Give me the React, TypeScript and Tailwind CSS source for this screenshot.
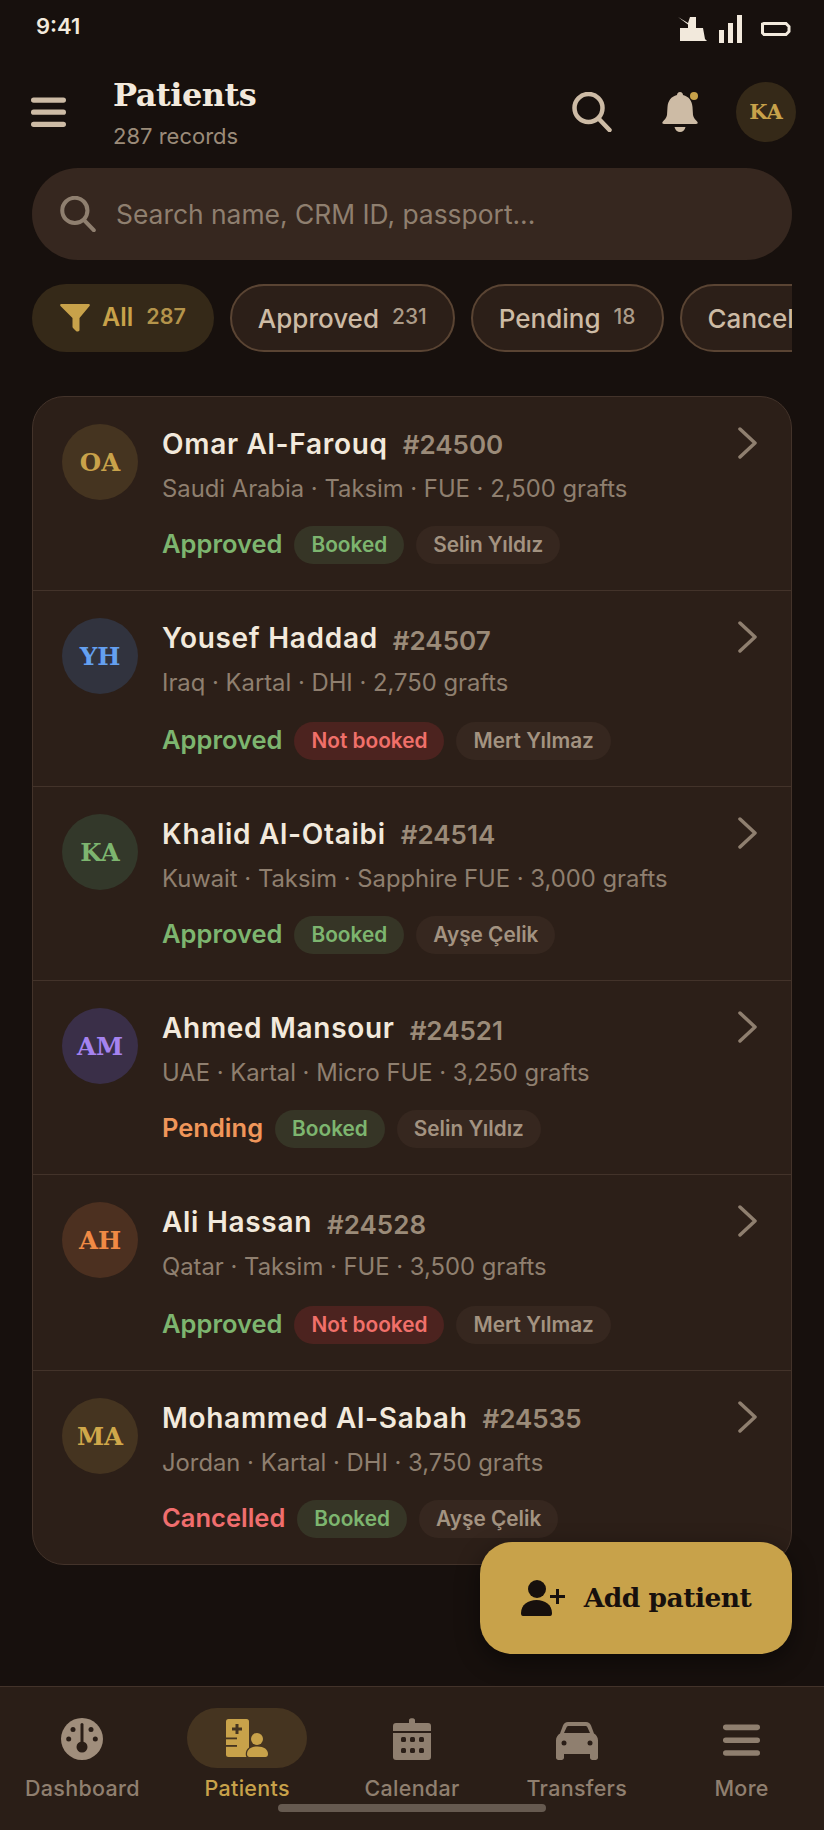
import React from 'react';

const SANS = 'font-["Inter","Noto_Sans",sans-serif]';
const SERIF = 'font-["DejaVu_Serif","Liberation_Serif",serif]';

type Patient = {
  initials: string;
  avatarClass: string;
  name: string;
  id: string;
  idDrop: boolean;
  info: string;
  status: 'Approved' | 'Pending' | 'Cancelled';
  booked: boolean;
  staff: string;
};

const PATIENTS: Patient[] = [
  { initials: 'OA', avatarClass: 'bg-[#453420] text-[#c8a24a]', name: 'Omar Al-Farouq', id: '#24500', idDrop: false, info: 'Saudi Arabia · Taksim · FUE · 2,500 grafts', status: 'Approved', booked: true, staff: 'Selin Yıldız' },
  { initials: 'YH', avatarClass: 'bg-[#31333e] text-[#64a0f0]', name: 'Yousef Haddad', id: '#24507', idDrop: true, info: 'Iraq · Kartal · DHI · 2,750 grafts', status: 'Approved', booked: false, staff: 'Mert Yılmaz' },
  { initials: 'KA', avatarClass: 'bg-[#33382a] text-[#7db56f]', name: 'Khalid Al-Otaibi', id: '#24514', idDrop: false, info: 'Kuwait · Taksim · Sapphire FUE · 3,000 grafts', status: 'Approved', booked: true, staff: 'Ayşe Çelik' },
  { initials: 'AM', avatarClass: 'bg-[#3a2f48] text-[#a583f0]', name: 'Ahmed Mansour', id: '#24521', idDrop: true, info: 'UAE · Kartal · Micro FUE · 3,250 grafts', status: 'Pending', booked: true, staff: 'Selin Yıldız' },
  { initials: 'AH', avatarClass: 'bg-[#4c3020] text-[#f08a45]', name: 'Ali Hassan', id: '#24528', idDrop: true, info: 'Qatar · Taksim · FUE · 3,500 grafts', status: 'Approved', booked: false, staff: 'Mert Yılmaz' },
  { initials: 'MA', avatarClass: 'bg-[#453420] text-[#d0a84a]', name: 'Mohammed Al-Sabah', id: '#24535', idDrop: false, info: 'Jordan · Kartal · DHI · 3,750 grafts', status: 'Cancelled', booked: true, staff: 'Ayşe Çelik' },
];

const STATUS_COLOR = {
  Approved: 'text-[#7db56f]',
  Pending: 'text-[#f0965a]',
  Cancelled: 'text-[#f06e6e]',
};

const SearchIcon = ({ className }: { className: string }) => (
  <svg viewBox="0 0 40 40" className={className} fill="none" stroke="currentColor" strokeWidth="4.5" strokeLinecap="round">
    <circle cx="16.5" cy="16" r="14" />
    <path d="M27 27l10.5 11" />
  </svg>
);

const BarsIcon = ({ className }: { className: string }) => (
  <svg viewBox="0 0 36 30" className={className} fill="currentColor">
    <rect x="0" y="0" width="36" height="5.4" rx="2.7" />
    <rect x="0" y="12.5" width="36" height="5.4" rx="2.7" />
    <rect x="0" y="25" width="36" height="5.4" rx="2.7" />
  </svg>
);

const StatusBar = () => (
  <div className="flex h-[50px] items-center justify-between pl-[36px] pr-[33px] text-[#f2e9dc]">
    <span className="mt-[2px] text-[22px] font-semibold">9:41</span>
    <div className="mt-[8px] flex items-center gap-[10px]">
      <svg viewBox="0 0 32 28" className="h-[28px] w-[32px]" fill="currentColor">
        <path d="M1 2l10 6 2-6h6v11h7l2 11 2 2h-2l-.5 0H3V13h8V9.500z" />
      </svg>
      <svg viewBox="0 0 24 28" className="h-[28px] w-[24px]" fill="currentColor">
        <rect x="0" y="15" width="5" height="13" />
        <rect x="9" y="8" width="5" height="20" />
        <rect x="18" y="0" width="5" height="28" />
      </svg>
      <svg viewBox="0 0 30 14" className="ml-[8px] h-[14px] w-[30px]" fill="none" stroke="currentColor" strokeWidth="3">
        <path d="M3 1.500h22l3 3v5l-3 3H3l-1.500-1.500v-9z" />
      </svg>
    </div>
  </div>
);

const Header = () => (
  <div className="mt-[12px] flex h-[100px] items-center pl-[31px] pr-[28px]">
    <BarsIcon className="h-[30px] w-[35px] text-[#cdbba5]" />
    <div className="ml-[47px]">
      <h1 className={`${SERIF} text-[32px] leading-[40px] font-bold tracking-[-0.5px] text-[#f2e9dc]`}>Patients</h1>
      <p className="mt-[7px] text-[22px] leading-[28px] text-[#9b8b79]">287 records</p>
    </div>
    <div className="ml-auto flex items-center">
      <SearchIcon className="h-[40px] w-[40px] text-[#cdbba5]" />
      <div className="relative ml-[50px] h-[40px] w-[36px]">
        <svg viewBox="0 0 36 40" className="h-[40px] w-[36px]" fill="#cdbba5">
          <path d="M18 0c2 0 3 1.500 3 3 6 1.500 9 6 9.500 12l.5 8c.3 3 3 5 4.500 7 .5 1 0 2-1.500 2H2c-1.500 0-2-1-1.500-2 1.500-2 4.200-4 4.500-7l.5-8C6 9 9 4.500 15 3c0-1.500 1-3 3-3z" />
          <path d="M12.500 35h11c-.5 3-3 5-5.500 5s-5-2-5.500-5z" />
        </svg>
        <span className="absolute top-0 right-0 h-[8px] w-[8px] rounded-full bg-[#c8a24a]" />
      </div>
      <div className={`${SERIF} ml-[38px] flex h-[60px] w-[60px] items-center justify-center rounded-full bg-[#352918] text-[21px] font-bold text-[#c8a24a]`}>KA</div>
    </div>
  </div>
);

const FilterChips = () => (
  <div className="mt-[24px] flex gap-[16px] overflow-hidden">
    <div className="flex h-[68px] shrink-0 items-center rounded-full bg-[#352918] pr-[28px] pl-[28px] text-[#c8a24a]">
      <svg viewBox="0 0 30 28" className="h-[28px] w-[30px]" fill="currentColor">
        <path d="M1.500 0h27c1.200 0 1.800 1 1 2L19.500 14v12c0 1.500-2.500 2-3.500 1l-3-3c-.5-.5-.5-1-.5-1.500V14L.5 2c-.8-1-.2-2 1-2z" />
      </svg>
      <span className="ml-[12px] text-[25px] font-semibold">All</span>
      <span className="mb-[3px] ml-[13px] text-[21.5px] font-semibold text-[#b4944b]">287</span>
    </div>
    {[
      { label: 'Approved', count: '231' },
      { label: 'Pending', count: '18' },
      { label: 'Cancelled', count: '' },
    ].map((chip) => (
      <div key={chip.label} className="flex h-[68px] shrink-0 items-center rounded-full border-2 border-[#5a4433] bg-[#2c1f18] pr-[26px] pl-[26px]">
        <span className="text-[26px] font-medium text-[#cdbba5]">{chip.label}</span>
        {chip.count && <span className="mb-[3px] ml-[13px] text-[21px] font-medium text-[#ab9b88]">{chip.count}</span>}
      </div>
    ))}
  </div>
);

const Pill = ({ className, children }: { className: string; children: React.ReactNode }) => (
  <span className={`flex h-[38px] items-center rounded-full px-[17px] text-[20.8px] font-semibold ${className}`}>{children}</span>
);

const PatientRow = ({ patient, last }: { patient: Patient; last: boolean }) => (
  <div className={`flex pt-[27px] pr-[33px] pb-[26px] pl-[29px] ${last ? '' : 'border-b border-[#43332a]'}`}>
    <div className={`${SERIF} flex h-[76px] w-[76px] shrink-0 items-center justify-center rounded-full pt-[3px] text-[24.5px] font-bold ${patient.avatarClass}`}>
      {patient.initials}
    </div>
    <div className="ml-[24px] min-w-0 flex-1">
      <div className="flex h-[40px] items-baseline gap-[15px] whitespace-nowrap">
        <span className="text-[28px] leading-[40px] font-semibold tracking-[0.7px] text-[#f2e9dc]">{patient.name}</span>
        <span className={`text-[26px] font-semibold text-[#9b8b79] ${patient.idDrop ? 'translate-y-[2px]' : ''}`}>{patient.id}</span>
      </div>
      <p className="mt-[8px] text-[23.8px] leading-[34px] whitespace-nowrap text-[#8f7f6f]">{patient.info}</p>
      <div className={`flex items-center gap-[12px] ${patient.booked ? 'mt-[20px]' : 'mt-[22px]'}`}>
        <span className={`mb-[2px] text-[25.5px] leading-[32px] font-semibold ${STATUS_COLOR[patient.status]}`}>{patient.status}</span>
        {patient.booked ? (
          <Pill className="bg-[#363526] text-[#7db56f]">Booked</Pill>
        ) : (
          <Pill className="bg-[#4c231f] text-[#f0706a]">Not booked</Pill>
        )}
        <Pill className="bg-[#36271f] text-[#a39381]">{patient.staff}</Pill>
      </div>
    </div>
    <svg viewBox="0 0 20 32" className="mt-[3px] h-[32px] w-[20px] shrink-0 text-[#8f7f6f]" fill="none" stroke="currentColor" strokeWidth="3.500" strokeLinecap="round" strokeLinejoin="round">
      <path d="M2 2l15 14L2 30" />
    </svg>
  </div>
);

const BottomNav = () => (
  <div className="relative h-[144px] shrink-0 border-t-[1.5px] border-[#43332a] bg-[#2a1e17]">
    <div className="grid grid-cols-5 text-[21.5px] font-medium tracking-[0.3px] text-[#8f7f6f]">
      <div className="flex flex-col items-center">
        <div className="flex h-[81px] items-end pb-[8px]">
          <svg viewBox="0 0 42 42" className="h-[42px] w-[42px]" fill="#a08e7c">
            <circle cx="21" cy="21" r="21" />
            <g fill="#2a1e17">
              <circle cx="21" cy="29" r="5.500" />
              <rect x="19.500" y="5" width="3" height="24" rx="1.500" />
              <circle cx="7.700" cy="21" r="2.500" />
              <circle cx="34.300" cy="21" r="2.500" />
              <circle cx="12" cy="11.500" r="2.500" />
              <circle cx="30" cy="11.500" r="2.500" />
            </g>
          </svg>
        </div>
        <span className="mt-[4px]">Dashboard</span>
      </div>
      <div className="flex flex-col items-center text-[#c8a24a]">
        <div className="mt-[21px] flex h-[60px] w-[120px] items-center justify-center rounded-full bg-[#453420]">
          <svg viewBox="0 0 42 38" className="h-[38px] w-[42px]" fill="#c8a24a">
            <rect x="0" y="0" width="23" height="38" rx="2.500" />
            <rect x="9.500" y="5" width="3" height="10" fill="#453420" />
            <rect x="6" y="8.500" width="10" height="3" fill="#453420" />
            <rect x="0" y="18.500" width="11" height="1.800" fill="#453420" />
            <rect x="0" y="26" width="11" height="1.800" fill="#453420" />
            <circle cx="31" cy="20" r="6" />
            <path d="M21 35c0-4.500 4-7.500 10.500-7.500S42 30.500 42 35c0 2-1 3-2.500 3H23.500C22 38 21 37 21 35z" stroke="#453420" strokeWidth="2.500" paintOrder="stroke" />
          </svg>
        </div>
        <span className="mt-[4px]">Patients</span>
      </div>
      <div className="flex flex-col items-center">
        <div className="flex h-[81px] items-end pb-[8px]">
          <svg viewBox="0 0 38 42" className="h-[42px] w-[38px]" fill="#8f7f6f">
            <path d="M3 5h13V2c0-2.500 6-2.500 6 0v3h13c2 0 3 1 3 3v5H0V8c0-2 1-3 3-3z" />
            <path d="M0 15h38v24c0 2-1 3-3 3H3c-2 0-3-1-3-3z" />
            <g fill="#2a1e17">
              <rect x="8" y="19" width="5" height="5" rx="1.500" />
              <rect x="17" y="19" width="5" height="5" rx="1.500" />
              <rect x="26" y="19" width="5" height="5" rx="1.500" />
              <rect x="8" y="30" width="5" height="5" rx="1.500" />
              <rect x="17" y="30" width="5" height="5" rx="1.500" />
              <rect x="26" y="30" width="5" height="5" rx="1.500" />
            </g>
          </svg>
        </div>
        <span className="mt-[4px]">Calendar</span>
      </div>
      <div className="flex flex-col items-center">
        <div className="flex h-[81px] items-end pb-[8px]">
          <svg viewBox="0 0 42 38" className="h-[38px] w-[42px]" fill="#8f7f6f">
            <path fillRule="evenodd" d="M12 0h18c2.500 0 4 1.500 5 3.500l3 8c2.500 1.500 4 4 4 7v17c0 1.500-1 2.500-2.500 2.500h-3c-1.500 0-2.500-1-2.500-2.500V32H8v3.500C8 37 7 38 5.500 38h-3C1 38 0 37 0 35.500v-17c0-3 1.500-5.500 4-7l3-8C8 1.500 9.500 0 12 0zm.5 4c-1 0-1.500.5-2 1.500L8 11h26l-2.500-5.500c-.5-1-1-1.500-2-1.500z" />
            <circle cx="8" cy="21" r="2.500" fill="#2a1e17" />
            <circle cx="34" cy="21" r="2.500" fill="#2a1e17" />
          </svg>
        </div>
        <span className="mt-[4px]">Transfers</span>
      </div>
      <div className="flex flex-col items-center">
        <div className="flex h-[81px] items-end pb-[12px]">
          <BarsIcon className="h-[32px] w-[37px] text-[#8f7f6f]" />
        </div>
        <span className="mt-[4px]">More</span>
      </div>
    </div>
    <div className="absolute bottom-[18px] left-[278px] h-[8px] w-[268px] rounded-full bg-[#665a50]" />
  </div>
);

export default function App() {
  return (
    <div className={`${SANS} flex h-[1830px] w-[824px] flex-col overflow-hidden bg-[#17100d]`}>
      <StatusBar />
      <Header />
      <div className="relative flex-1 px-[32px]">
        <div className="mt-[6px] flex h-[92px] items-center rounded-[46px] bg-[#36271f] pr-[32px] pl-[28px]">
          <SearchIcon className="h-[36px] w-[36px] text-[#8f7f6f]" />
          <span className="mt-[2px] ml-[20px] text-[26.4px] text-[#8f7f6f]">Search name, CRM ID, passport...</span>
        </div>
        <FilterChips />
        <div className="mt-[44px] overflow-hidden rounded-[32px] border-[1.5px] border-[#43332a] bg-[#2c1f18]">
          {PATIENTS.map((patient, idx) => (
            <PatientRow key={patient.id} patient={patient} last={idx === PATIENTS.length - 1} />
          ))}
        </div>
        <button className="absolute top-[1380px] right-[32px] flex h-[112px] w-[312px] items-center justify-center rounded-[32px] bg-[#c8a24a] text-[#17100d] shadow-[0_8px_24px_rgba(0,0,0,0.45)]">
          <svg viewBox="0 0 44 36" className="h-[36px] w-[44px]" fill="currentColor">
            <circle cx="16" cy="9" r="9" />
            <path d="M0 33c0-8 7-13 15.500-13S31 25 31 33c0 2-.5 3-2 3H2c-1.500 0-2-1-2-3z" />
            <rect x="29" y="15" width="15" height="3" />
            <rect x="35" y="9" width="3" height="15" />
          </svg>
          <span className={`${SERIF} ml-[19px] text-[26.5px] font-bold tracking-[-0.5px]`}>Add patient</span>
        </button>
      </div>
      <BottomNav />
    </div>
  );
}
